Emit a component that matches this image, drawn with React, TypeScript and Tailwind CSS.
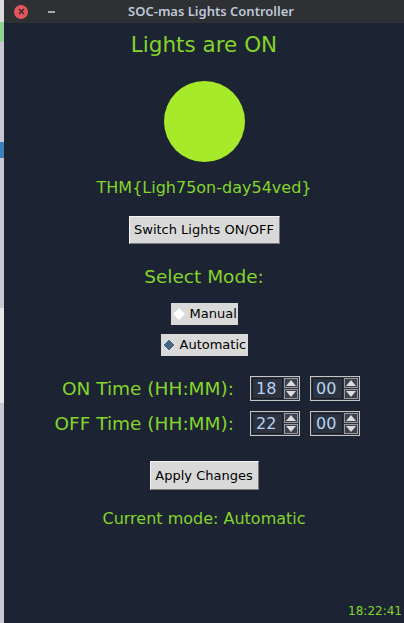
import React from "react"

const green = "text-[#84d42a]"

function Spin({ value }: { value: string }) {
  return (
    <div className="flex h-[25px] w-[50px] border border-[#c4c4c4] bg-[#2c3240] p-[1px]">
      <div className="flex flex-1 items-center border border-[#1a1e27] pl-[3px] text-[16px] leading-none text-[#b9d4f0]">
        {value}
      </div>
      <div className="flex w-[15px] flex-col gap-[1px] pl-[1px]">
        <div className="flex flex-1 items-center justify-center border border-[#9a9a9a] bg-[#3b4150]">
          <svg width="10" height="6" viewBox="0 0 10 6">
            <polygon points="5,0 10,6 0,6" fill="#dcdcdc" />
          </svg>
        </div>
        <div className="flex flex-1 items-center justify-center border border-[#9a9a9a] bg-[#3b4150]">
          <svg width="10" height="6" viewBox="0 0 10 6">
            <polygon points="0,0 10,0 5,6" fill="#dcdcdc" />
          </svg>
        </div>
      </div>
    </div>
  )
}

function TkButton({ label, className }: { label: string; className?: string }) {
  return (
    <div
      className={`flex items-center justify-center border border-t-[#f4f4f4] border-l-[#f4f4f4] border-r-[#7a7a7a] border-b-[#7a7a7a] bg-[#d9d9d9] text-[13px] text-black ${className ?? ""}`}
    >
      {label}
    </div>
  )
}

export default function App() {
  return (
    <div className="flex h-[623px] w-[404px] overflow-hidden bg-[#1c2333]" style={{ fontFamily: '"DejaVu Sans", sans-serif' }}>
      {/* edge of window behind */}
      <div className="flex w-[4px] flex-col bg-[#c9c9d6]">
        <div className="h-[22px] bg-[#dcdcdc]" />
        <div className="h-[20px] bg-[#8fd38f]" />
        <div className="h-[100px]" />
        <div className="h-[16px] bg-[#3d7fb8]" />
        <div className="h-[150px]" />
        <div className="h-[95px] bg-[#e6e6e6]" />
      </div>

      <div className="flex flex-1 flex-col">
        {/* title bar */}
        <div className="relative flex h-[23px] items-center bg-[#2e3034]">
          <div className="ml-[10px] flex h-[14px] w-[14px] items-center justify-center rounded-full bg-[#e0565b]">
            <svg width="7" height="7" viewBox="0 0 7 7">
              <path d="M1 1L6 6M6 1L1 6" stroke="#3a2a2c" strokeWidth="1.6" />
            </svg>
          </div>
          <div className="ml-[20px] h-[2px] w-[7px] bg-[#a9a9a9]" />
          <div
            className="absolute inset-0 flex items-center justify-center pl-[14px] text-[13px] font-semibold text-[#bfc8d6]"
            style={{ fontFamily: '"Noto Sans", sans-serif' }}
          >
            SOC-mas Lights Controller
          </div>
        </div>

        {/* body */}
        <div className="relative flex flex-1 flex-col items-center">
          <div className={`mt-[9px] text-[21.5px] leading-[26px] ${green}`}>Lights are ON</div>
          <div className="mt-[23px] h-[81px] w-[81px] rounded-full bg-[#a6ea2a]" />
          <div className={`mt-[16px] text-[16px] leading-[20px] ${green}`}>THM{"{"}Ligh75on-day54ved{"}"}</div>
          <TkButton label="Switch Lights ON/OFF" className="mt-[18px] h-[28px] w-[151px]" />
          <div className={`mt-[21px] text-[18.5px] leading-[24px] ${green}`}>Select Mode:</div>

          <div className="mt-[14px] flex h-[22px] w-[67px] items-center bg-[#d9d9d9] text-[13px] text-black">
            <svg width="14" height="14" viewBox="0 0 14 14" className="ml-[1px]">
              <polygon points="7,1 13,7 7,13 1,7" fill="#ffffff" />
            </svg>
            <span className="ml-[4px]">Manual</span>
          </div>
          <div className="mt-[9px] flex h-[22px] w-[87px] items-center bg-[#d9d9d9] text-[13px] text-black">
            <svg width="14" height="14" viewBox="0 0 14 14" className="ml-[1px]">
              <polygon points="7,1 13,7 7,13 1,7" fill="#4a6784" stroke="#ffffff" strokeWidth="0.8" />
            </svg>
            <span className="ml-[4px]">Automatic</span>
          </div>

          <div className="mt-[20px] flex flex-col gap-[10px]">
            <div className="flex items-center">
              <div className={`w-[202px] pr-[16px] text-right text-[18.5px] leading-[25px] whitespace-nowrap ${green}`}>ON Time (HH:MM):</div>
              <Spin value="18" />
              <div className="w-[10px]" />
              <Spin value="00" />
            </div>
            <div className="flex items-center">
              <div className={`w-[202px] pr-[16px] text-right text-[18.5px] leading-[25px] whitespace-nowrap ${green}`}>OFF Time (HH:MM):</div>
              <Spin value="22" />
              <div className="w-[10px]" />
              <Spin value="00" />
            </div>
          </div>

          <TkButton label="Apply Changes" className="mt-[25px] h-[29px] w-[109px]" />
          <div className={`mt-[19px] text-[16px] leading-[20px] ${green}`}>Current mode: Automatic</div>

          <div className={`absolute bottom-[3px] right-[2px] text-[12px] ${green}`}>18:22:41</div>
        </div>
      </div>
    </div>
  )
}
